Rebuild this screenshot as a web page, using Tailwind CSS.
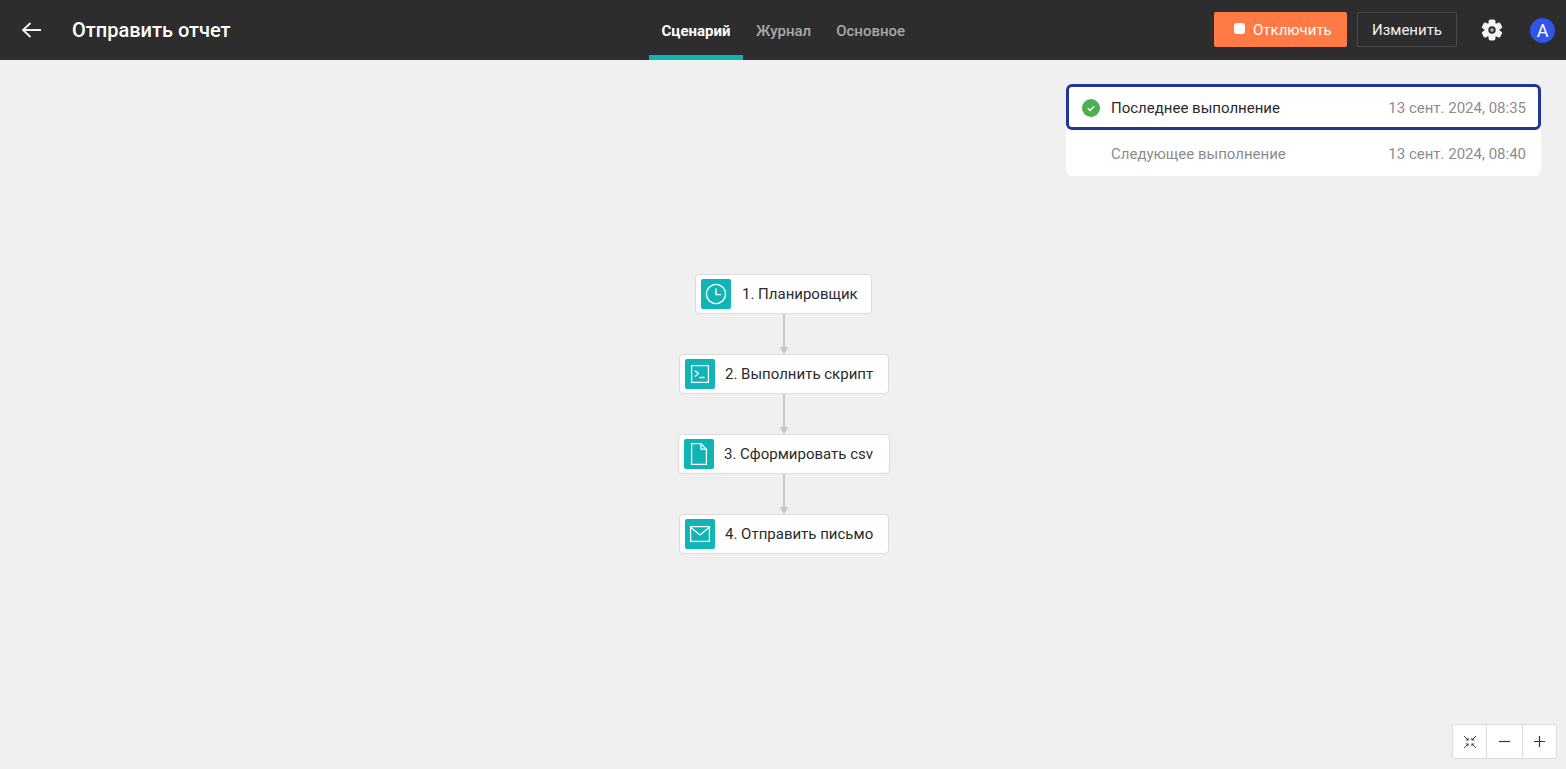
<!DOCTYPE html>
<html lang="ru">
<head>
    <meta charset="UTF-8">
    <title>Отправить отчет</title>
    <script src="https://cdn.jsdelivr.net/npm/@tailwindcss/browser@4"></script>
</head>
<body class="bg-[#f0f0f0] font-[Roboto,sans-serif] overflow-hidden">
    <div class="h-[769px] flex flex-col">
        <!-- header -->
        <header class="h-[60px] shrink-0 bg-[#2d2d2d] flex items-center text-white">
            <div class="w-[649px] flex items-center">
                <svg class="ml-[21px] w-[20px] h-[20px]" viewBox="0 0 20 20" fill="none" stroke="#f5f5f5" stroke-width="1.8"><path d="M20 10H2M9.5 3L2 10l7.5 7"/></svg>
                <span class="ml-[31px] text-[20px] font-medium leading-none">Отправить отчет</span>
            </div>
            <nav class="flex h-full text-[15px] font-medium">
                <a class="w-[94px] flex items-center justify-center border-b-[5px] border-[#0fb5b5] pt-[7px] text-white font-bold">Сценарий</a>
                <a class="ml-[13px] flex items-center pt-[2px] text-[#a8a8a8]">Журнал</a>
                <a class="ml-[25px] flex items-center pt-[2px] text-[#a8a8a8]">Основное</a>
            </nav>
            <div class="ml-auto flex items-center">
                <button class="mb-px w-[133px] h-[35px] pl-[20px] bg-[#ff7a45] rounded-[2px] flex items-center text-[15px] text-white">
                    <span class="w-[11px] h-[11px] bg-white rounded-[3px] mr-[8px] mb-[3px]"></span><span class="pt-[2px]">Отключить</span>
                </button>
                <button class="mb-px ml-[10px] w-[100px] h-[35px] pt-[2px] border border-[#4a4a4a] rounded-[2px] text-[15px] text-[#f2f2f2]">Изменить</button>
                <svg class="ml-[23px] w-[24px] h-[24px]" viewBox="0 0 24 24" fill="#f5f5f5">
                    <rect x="8.6" y="1.5" width="6.8" height="21" rx="1.8"/>
                    <rect x="8.6" y="1.5" width="6.8" height="21" rx="1.8" transform="rotate(60 12 12)"/>
                    <rect x="8.6" y="1.5" width="6.8" height="21" rx="1.8" transform="rotate(120 12 12)"/>
                    <circle cx="12" cy="12" r="7.6"/>
                    <circle cx="12" cy="12" r="3.7" fill="#2d2d2d"/>
                    <circle cx="12" cy="12" r="1.8" fill="#b5b5b5"/>
                </svg>
                <span class="ml-[26px] mr-[11px] w-[25px] h-[25px] rounded-full bg-[#2f55eb] flex items-center justify-center text-[18px] text-white">A</span>
            </div>
        </header>

        <main class="relative flex-1">
            <!-- status panel -->
            <div class="absolute left-[1066px] top-[24px] w-[475px] bg-white rounded-[6px] text-[15px]">
                <div class="h-[46px] border-[3px] border-[#1f3799] rounded-[6px] flex items-center pl-[13px] pr-[12px] text-[#2b2b2b]">
                    <svg class="w-[18px] h-[18px] mr-[11px] mt-[2px]" viewBox="0 0 18 18"><circle cx="9" cy="9" r="9" fill="#4caf50"/><path d="M5.8 9.2l2.3 2.2 4-4.2" fill="none" stroke="#fff" stroke-width="1.4"/></svg>
                    <span class="pt-[2px]">Последнее выполнение</span>
                    <span class="ml-auto pt-[2px] text-[#8c8c8c]">13 сент. 2024, 08:35</span>
                </div>
                <div class="h-[46px] flex items-center pl-[45px] pr-[15px] pt-[2px] text-[#8c8c8c]">
                    <span>Следующее выполнение</span>
                    <span class="ml-auto">13 сент. 2024, 08:40</span>
                </div>
            </div>

            <!-- workflow diagram -->
            <div class="absolute left-[678px] top-[214px] w-[212px] flex flex-col items-center text-[15px] text-[#2b2b2b]">
                <div class="self-start ml-[17px] w-[177px] h-[40px] bg-white border border-[#dcdcdc] rounded-[4px] flex items-center pl-[5px]">
                    <span class="w-[30px] h-[30px] bg-[#0fb5b5] rounded-[2px] flex items-center justify-center">
                        <svg class="w-[22px] h-[22px]" viewBox="0 0 22 22" fill="none" stroke="#fff" stroke-width="1.4"><circle cx="11" cy="11" r="9.6"/><path d="M11 5.5V11.6h5"/></svg>
                    </span>
                    <span class="ml-[11px]">1. Планировщик</span>
                </div>
                <div class="w-[8px] h-[40px] flex flex-col items-center">
                    <span class="w-[2px] flex-1 bg-[#c8c8c8]"></span>
                    <svg class="w-[8px] h-[7px]" viewBox="0 0 8 7" fill="#c4c4c4"><path d="M0 0h8L4 7z"/></svg>
                </div>
                <div class="w-[210px] h-[40px] bg-white border border-[#dcdcdc] rounded-[4px] flex items-center pl-[5px]">
                    <span class="w-[30px] h-[30px] bg-[#0fb5b5] rounded-[2px] flex items-center justify-center">
                        <svg class="w-[20px] h-[20px]" viewBox="0 0 20 20" fill="none" stroke="#fff" stroke-width="1.3"><rect x="1.6" y="1.6" width="16.8" height="16.8"/><path d="M5 6.5L8.5 9.5 5 12.5M9.5 13.5h5"/></svg>
                    </span>
                    <span class="ml-[10px]">2. Выполнить скрипт</span>
                </div>
                <div class="w-[8px] h-[40px] flex flex-col items-center">
                    <span class="w-[2px] flex-1 bg-[#c8c8c8]"></span>
                    <svg class="w-[8px] h-[7px]" viewBox="0 0 8 7" fill="#c4c4c4"><path d="M0 0h8L4 7z"/></svg>
                </div>
                <div class="w-[212px] h-[40px] bg-white border border-[#dcdcdc] rounded-[4px] flex items-center pl-[5px]">
                    <span class="w-[30px] h-[30px] bg-[#0fb5b5] rounded-[2px] flex items-center justify-center">
                        <svg class="w-[18px] h-[24px]" viewBox="0 0 18 24" fill="none" stroke="#fff" stroke-width="1.3"><path d="M1.6 1.6h9.4l5.4 5.6v15.2H1.6zM11 1.6v5.6h5.4"/></svg>
                    </span>
                    <span class="ml-[10px]">3. Сформировать csv</span>
                </div>
                <div class="w-[8px] h-[40px] flex flex-col items-center">
                    <span class="w-[2px] flex-1 bg-[#c8c8c8]"></span>
                    <svg class="w-[8px] h-[7px]" viewBox="0 0 8 7" fill="#c4c4c4"><path d="M0 0h8L4 7z"/></svg>
                </div>
                <div class="w-[210px] h-[40px] bg-white border border-[#dcdcdc] rounded-[4px] flex items-center pl-[5px]">
                    <span class="w-[30px] h-[30px] bg-[#0fb5b5] rounded-[2px] flex items-center justify-center">
                        <svg class="w-[22px] h-[18px]" viewBox="0 0 22 18" fill="none" stroke="#fff" stroke-width="1.3"><rect x="1.6" y="1.6" width="18.8" height="14.8"/><path d="M1.6 2.2L11 10l9.4-7.8"/></svg>
                    </span>
                    <span class="ml-[10px]">4. Отправить письмо</span>
                </div>
            </div>

            <!-- zoom controls -->
            <div class="absolute left-[1452px] top-[664px] h-[35px] w-[105px] bg-white border border-[#dcdcdc] rounded-[2px] flex text-[#333]">
                <span class="w-[34px] border-r border-[#dcdcdc] flex items-center justify-center">
                    <svg class="w-[14px] h-[14px]" viewBox="0 0 14 14" fill="#444" stroke="#444" stroke-width="1"><path d="M1 1l3 3M13 1l-3 3M1 13l3-3M13 13l-3-3"/><path stroke="none" d="M5.6 5.6H2.4l3.2-3.2zM8.4 5.6h3.2L8.4 2.4zM5.6 8.4H2.4l3.2 3.2zM8.4 8.4h3.2l-3.2 3.2z"/></svg>
                </span>
                <span class="w-[36px] border-r border-[#dcdcdc] flex items-center justify-center">
                    <svg class="w-[11px] h-[11px]" viewBox="0 0 11 11" stroke="#333" stroke-width="1.2"><path d="M0 5.5h11"/></svg>
                </span>
                <span class="flex-1 flex items-center justify-center">
                    <svg class="w-[11px] h-[11px]" viewBox="0 0 11 11" stroke="#333" stroke-width="1.2"><path d="M0 5.5h11M5.5 0v11"/></svg>
                </span>
            </div>
        </main>
    </div>
</body>
</html>
